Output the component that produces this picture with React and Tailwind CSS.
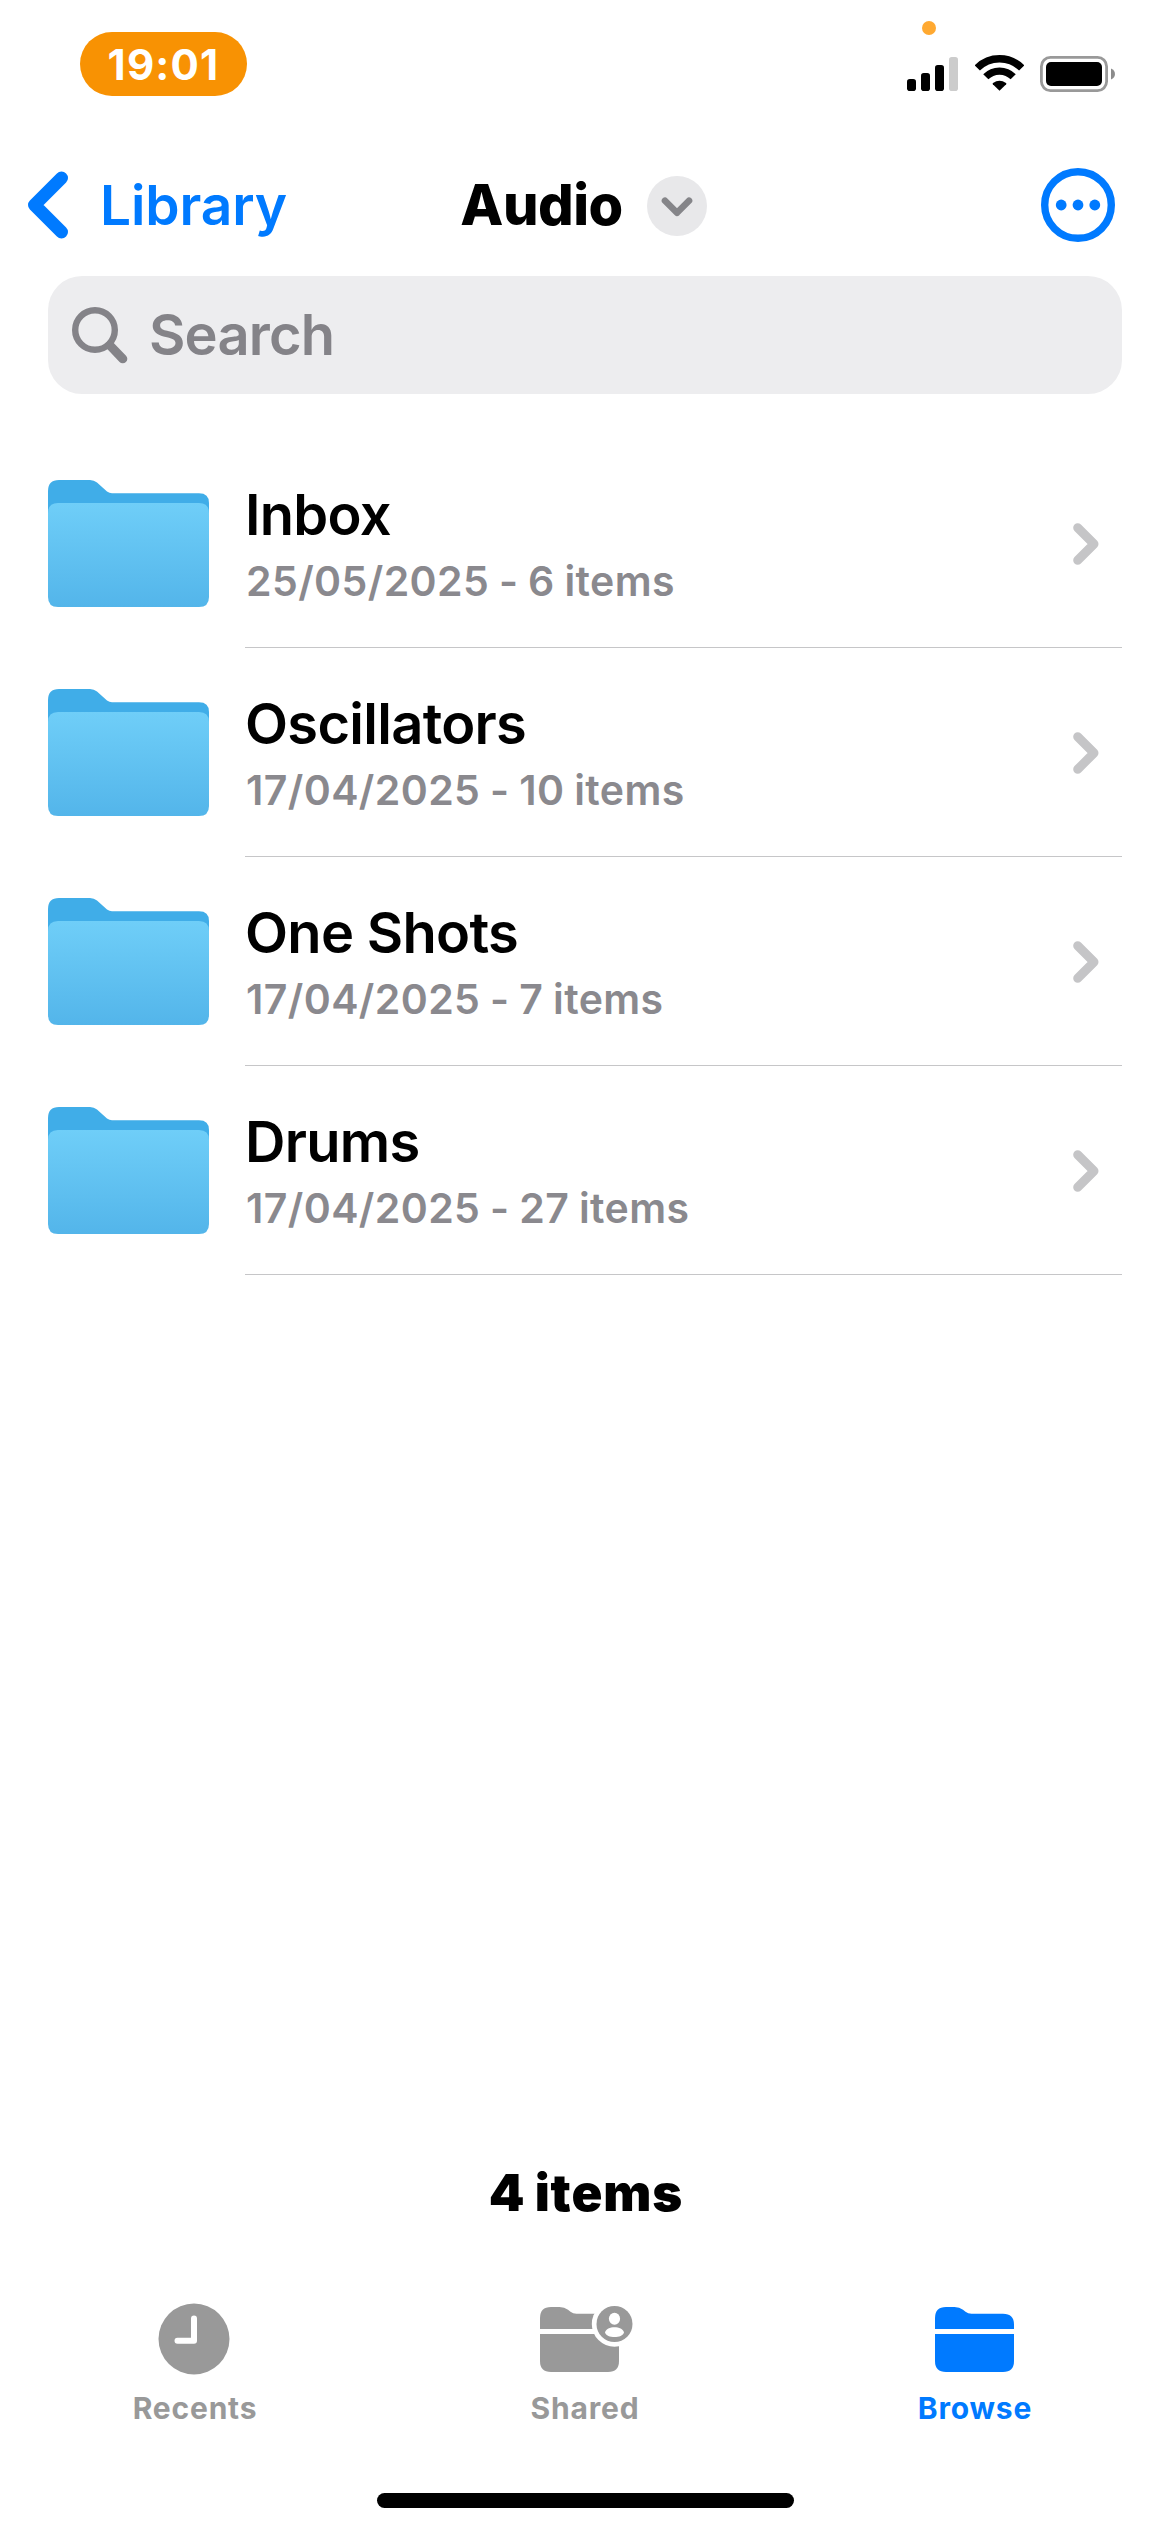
import React from "react";

const folders = [
  { name: "Inbox", date: "25/05/2025", count: 6 },
  { name: "Oscillators", date: "17/04/2025", count: 10 },
  { name: "One Shots", date: "17/04/2025", count: 7 },
  { name: "Drums", date: "17/04/2025", count: 27 },
];

const SignalIcon = () => (
  <svg width="51" height="34" viewBox="0 0 51 34" fill="#000">
    <rect x="0" y="22" width="9" height="12" rx="2.8" />
    <rect x="14" y="16" width="9" height="18" rx="2.8" />
    <rect x="28" y="8" width="9" height="26" rx="2.8" />
    <rect x="42" y="0" width="9" height="34" rx="2.8" fill="#ccc" />
  </svg>
);

const WifiIcon = () => (
  <svg width="49" height="36" viewBox="0 0 49 36" fill="none" stroke="#000">
    <path d="M2.3 13 A31.4 31.4 0 0 1 46.7 13" strokeWidth="7.4" />
    <path d="M10.8 21.8 A19.2 19.2 0 0 1 38.2 21.8" strokeWidth="7.2" />
    <path
      d="M24.5 35.8 L17.8 29.2 Q17.2 28.5 18 27.9 Q24.5 23.4 31 27.9 Q31.8 28.5 31.2 29.2 Z"
      fill="#000"
      stroke="none"
    />
  </svg>
);

const BatteryIcon = () => (
  <svg width="75" height="36" viewBox="0 0 75 36">
    <rect x="1.4" y="1.4" width="65.2" height="33.2" rx="9" fill="none" stroke="#999" strokeWidth="2.8" />
    <rect x="6" y="6" width="56" height="24" rx="5" fill="#000" />
    <path d="M71 12.5 C76.3 14.5 76.3 21.5 71 23.5 Z" fill="#8c8c8c" />
  </svg>
);

const FolderIcon = () => (
  <svg width="161" height="127" viewBox="0 0 161 127" className="block shrink-0">
    <defs>
      <linearGradient id="front" x1="0" y1="0" x2="0" y2="1">
        <stop offset="0" stopColor="#6fcef8" />
        <stop offset="1" stopColor="#53b5ea" />
      </linearGradient>
    </defs>
    <path
      d="M0 50 V11 Q0 0 11 0 H42 Q46 0 49 2.5 L59 11.5 Q61.5 13.3 64 13.3 H151 Q161 13.3 161 23 V50 Z"
      fill="#40ade8"
    />
    <path
      d="M0 33 Q0 23 10 23 H151 Q161 23 161 33 V117 Q161 127 151 127 H10 Q0 127 0 117 Z"
      fill="url(#front)"
    />
  </svg>
);

const ClockIcon = () => (
  <svg width="72" height="72" viewBox="0 0 72 72" className="mr-0.5">
    <circle cx="36" cy="36" r="35.5" fill="#999" />
    <path d="M36 15.5 V37.7 H19.5" fill="none" stroke="#fff" strokeWidth="6" strokeLinecap="round" strokeLinejoin="round" />
  </svg>
);

const SmallFolder = () => (
  <>
    <path d="M0 22 V11 Q0 0 11 0 H19.5 Q24.5 0 28 2.8 L30.5 4.8 Q33 6.7 36.5 6.7 H68 Q79 6.7 79 17.5 V22 Z" />
    <path d="M0 27 H79 V54 Q79 65 68 65 H11 Q0 65 0 54 Z" />
  </>
);

const SharedIcon = () => (
  <svg width="94" height="67" viewBox="0 -1 94 67" fill="#999" className="ml-1">
    <SmallFolder />
    <circle cx="74.5" cy="17" r="22.7" fill="#fff" />
    <circle cx="74.5" cy="17" r="18" />
    <ellipse cx="74.5" cy="11.7" rx="5.6" ry="6" fill="#fff" />
    <path d="M65 25.5 C66.5 18.6 82.5 18.6 84 25.5 C82.5 31.6 66.5 31.6 65 25.5 Z" fill="#fff" />
  </svg>
);

const BrowseIcon = () => (
  <svg width="79" height="65" viewBox="0 0 79 65" fill="#007aff" className="mr-px">
    <SmallFolder />
  </svg>
);

const StatusBar = () => (
  <div className="relative h-[134px] flex justify-between items-start pl-20 pr-[55px]">
    <div className="mt-8 w-[167px] h-16 rounded-[32px] bg-[#f89203] text-white text-[42px] font-bold tracking-[1.2px] flex items-center justify-center">
      19:01
    </div>
    <span className="absolute top-[21px] left-[922px] w-3.5 h-3.5 rounded-full bg-[#ffa931]" />
    <div className="mt-[55px] flex items-start">
      <div className="mt-0.5 mr-[17px]">
        <SignalIcon />
      </div>
      <div className="mr-4">
        <WifiIcon />
      </div>
      <div className="mt-px">
        <BatteryIcon />
      </div>
    </div>
  </div>
);

const NavBar = () => (
  <div className="h-[142px] grid grid-cols-[1fr_auto_1fr] items-center">
    <div className="flex items-center pl-7 text-[#007aff]">
      <svg width="40" height="68" viewBox="0 0 40 68" fill="none" stroke="currentColor" strokeWidth="13" strokeLinecap="round" strokeLinejoin="round">
        <path d="M33.5 7 L6.5 34 L33.5 61" />
      </svg>
      <span className="ml-8 text-[55px] leading-none font-[570] tracking-[-0.1px]">Library</span>
    </div>
    <div className="flex items-center -ml-[3px]">
      <h1 className="text-[56px] leading-none font-extrabold tracking-[-0.5px]">Audio</h1>
      <div className="ml-6 mt-0.5 w-[60px] h-[60px] rounded-full bg-[#e8e8ea] flex items-center justify-center">
        <svg width="32" height="20" viewBox="0 0 32 20" fill="none" stroke="#858589" strokeWidth="6.6" strokeLinecap="round" strokeLinejoin="round" className="mt-0.5">
          <path d="M4 3.7 L16 15.8 L28 3.7" />
        </svg>
      </div>
    </div>
    <div className="flex justify-end pr-[55px]">
      <svg width="74" height="74" viewBox="0 0 74 74" fill="#007aff">
        <circle cx="37" cy="37" r="33.3" fill="none" stroke="#007aff" strokeWidth="7.4" />
        <circle cx="20.2" cy="37" r="5.4" />
        <circle cx="37" cy="37" r="5.4" />
        <circle cx="53.8" cy="37" r="5.4" />
      </svg>
    </div>
  </div>
);

const SearchBar = () => (
  <div className="mx-12 h-[118px] rounded-[34px] bg-[#ededef] flex items-center pl-6 text-[#848388]">
    <svg width="56" height="57" viewBox="0 0 56 57" fill="none" stroke="currentColor" strokeLinecap="round">
      <circle cx="23" cy="23" r="19.8" strokeWidth="6.4" />
      <path d="M38 38.5 L50.8 51.8" strokeWidth="9" />
    </svg>
    <span className="ml-[21px] text-[56px] leading-none font-[570] tracking-[-0.8px]">Search</span>
  </div>
);

const FolderRow = ({ folder }) => (
  <li className="h-[209px] pl-12 flex">
    <div className="pt-[41px]">
      <FolderIcon />
    </div>
    <div className="ml-9 mr-12 flex-1 border-b border-[#c6c6c8] flex justify-between">
      <div className="pt-[46px]">
        <h2 className="text-[56px] leading-[60px] font-[570] tracking-[-0.7px]">{folder.name}</h2>
        <p className="mt-[6px] pl-px text-[41px] leading-[60px] font-semibold tracking-[0.4px] [word-spacing:-1px] text-[#8a898e]">
          {folder.date} - {folder.count} items
        </p>
      </div>
      <svg width="26" height="42" viewBox="0 0 26 42" fill="none" stroke="#c5c5c7" strokeWidth="9" strokeLinecap="round" strokeLinejoin="round" className="mt-[84px] mr-[23px]">
        <path d="M4.7 4.7 L21 21 L4.7 37.3" />
      </svg>
    </div>
  </li>
);

const tabs = [
  { label: "Recents", icon: <ClockIcon />, color: "text-[#999999]" },
  { label: "Shared", icon: <SharedIcon />, color: "text-[#999999]" },
  { label: "Browse", icon: <BrowseIcon />, color: "text-[#007aff]" },
];

const TabBar = () => (
  <nav className="grid grid-cols-3">
    {tabs.map((tab) => (
      <div key={tab.label} className={`flex flex-col items-center ${tab.color}`}>
        <div className="h-[72px] flex items-center">{tab.icon}</div>
        <span className="mt-[18px] text-[30px] leading-[30px] font-bold tracking-[0.8px]">
          {tab.label}
        </span>
      </div>
    ))}
  </nav>
);

export default function App() {
  return (
    <div className="w-[1170px] h-[2532px] bg-white text-black font-['Inter',sans-serif] flex flex-col overflow-hidden">
      <StatusBar />
      <NavBar />
      <SearchBar />
      <ul className="mt-[45px]">
        {folders.map((folder) => (
          <FolderRow key={folder.name} folder={folder} />
        ))}
      </ul>
      <div className="mt-auto">
        <p className="pl-0.5 text-center text-[51px] leading-[60px] font-black tracking-[0.9px] [word-spacing:-2px]">4 items</p>
        <div className="mt-20">
          <TabBar />
        </div>
        <div className="mt-[70px] mb-6 mx-auto w-[417px] h-[15px] rounded-full bg-black" />
      </div>
    </div>
  );
}
